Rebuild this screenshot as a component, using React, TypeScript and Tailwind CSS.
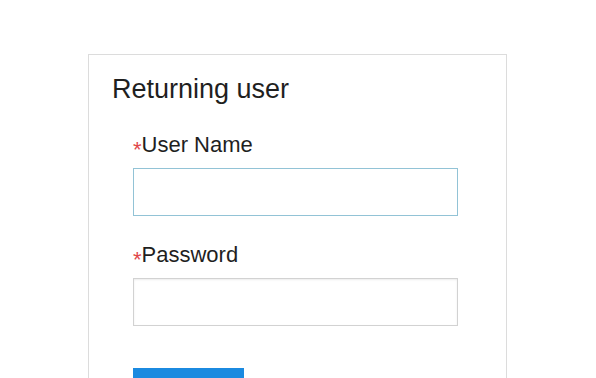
export default function App() {
  return (
    <div className="min-h-screen bg-white pl-[88px] pt-[54px] font-['Liberation_Sans',Arial,sans-serif] text-[#1f1f1f]">
      <div className="h-[400px] w-[419px] border border-[#dcdcdc] pl-[23px] pt-[18px]">
        <h2 className="text-[27px] leading-[32px]">Returning user</h2>

        <form className="mt-[27px] w-[325px] pl-[21px] box-content">
          <label className="block text-[22px] leading-[26px]">
            <span className="relative top-[5px] text-[#e0474c]">*</span>User Name
          </label>
          <input
            type="text"
            className="mt-[10px] block h-[48px] w-[325px] border border-[#92c3d6] bg-white outline-none"
          />

          <label className="mt-[26px] block text-[22px] leading-[26px]">
            <span className="relative top-[5px] text-[#e0474c]">*</span>Password
          </label>
          <input
            type="password"
            className="mt-[10px] block h-[48px] w-[325px] border border-[#d2d2d2] bg-white shadow-[inset_0_1px_2px_rgba(0,0,0,0.08)] outline-none"
          />

          <button
            type="submit"
            className="mt-[42px] block h-[44px] w-[111px] bg-[#1b8ae0] text-white"
          />
        </form>
      </div>
    </div>
  );
}
